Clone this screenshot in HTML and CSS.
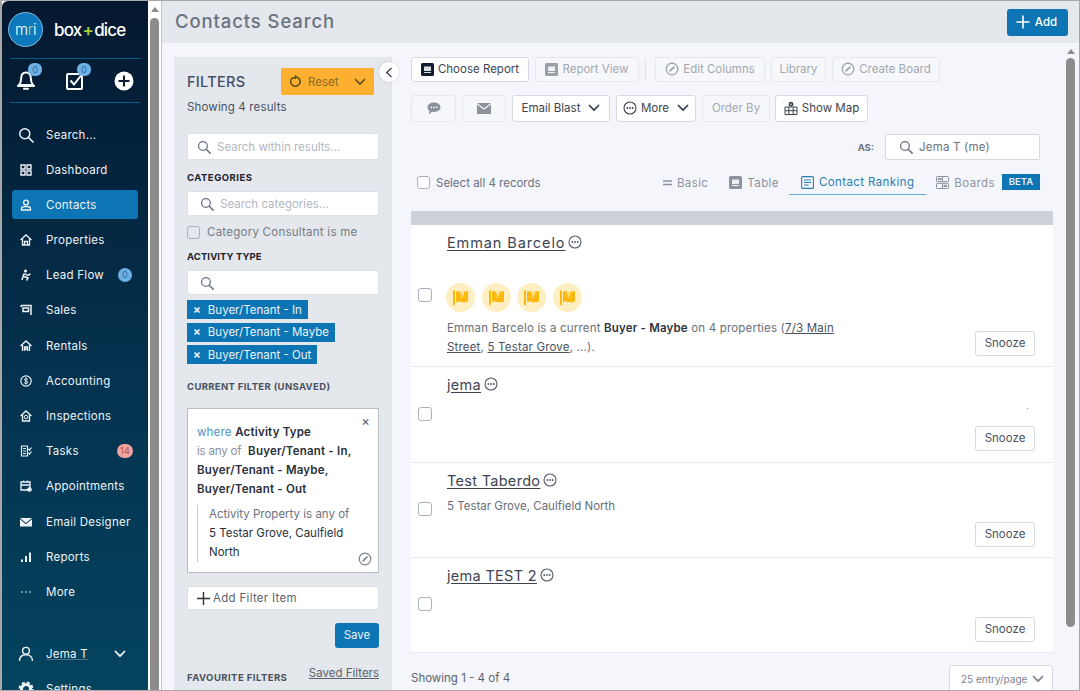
FILE: index.html
```html
<!DOCTYPE html>
<html lang="en">
<head>
  <meta charset="UTF-8">
  <title>Contacts Search</title>
  <link rel="stylesheet" href="styles.css">
</head>
<body>

<svg class="defs" width="0" height="0">
  <symbol id="i-search" viewBox="0 0 16 16"><circle cx="6.8" cy="6.8" r="5" fill="none" stroke="currentColor" stroke-width="1.5"/><path d="M10.5 10.5 15 15" stroke="currentColor" stroke-width="1.7" stroke-linecap="round"/></symbol>
  <symbol id="i-chev" viewBox="0 0 12 8"><path d="M1.5 1.5 6 6.2l4.5-4.7" fill="none" stroke="currentColor" stroke-width="1.8" stroke-linecap="round" stroke-linejoin="round"/></symbol>
  <symbol id="i-more" viewBox="0 0 14 14"><circle cx="7" cy="7" r="6" fill="none" stroke="currentColor" stroke-width="1.1"/><circle cx="4.3" cy="7" r=".95" fill="currentColor"/><circle cx="7" cy="7" r=".95" fill="currentColor"/><circle cx="9.7" cy="7" r=".95" fill="currentColor"/></symbol>
  <symbol id="i-ban" viewBox="0 0 14 14"><circle cx="7" cy="7" r="5.8" fill="none" stroke="currentColor" stroke-width="1.2"/><path d="M4.6 9.4 9.4 4.6" stroke="currentColor" stroke-width="1.5"/></symbol>
  <symbol id="i-report" viewBox="0 0 13 13"><rect width="13" height="13" rx="1.5" fill="currentColor"/><rect x="3" y="3.5" width="7" height="4.5" fill="#fff" opacity=".85"/><rect x="3" y="9" width="7" height="1" fill="#fff" opacity=".85"/></symbol>
  <symbol id="i-list" viewBox="0 0 13 13"><rect x=".6" y=".6" width="11.8" height="11.8" rx="1" fill="none" stroke="currentColor" stroke-width="1.1"/><path d="M3 4h7M3 6.5h7M3 9h4.5" stroke="currentColor" stroke-width="1"/></symbol>
  <symbol id="i-boards" viewBox="0 0 13 13"><rect x=".5" y=".5" width="12" height="5.2" rx=".8" fill="none" stroke="currentColor"/><rect x=".5" y="7.3" width="12" height="5.2" rx=".8" fill="none" stroke="currentColor"/><rect x="2" y="2" width="3.4" height="2.2" fill="currentColor"/><rect x="7.6" y="8.8" width="3.4" height="2.2" fill="currentColor"/><path d="M6.5 .5v5M6.5 7.3v5" stroke="currentColor"/></symbol>
  <symbol id="i-flag" viewBox="0 0 17 17"><rect x="1" y="1.5" width="2" height="14.5" fill="currentColor"/><path d="M4 2.5c3-1 5 .8 8 .2l4-.7v10.5c-3 1.4-5 .6-7.5.2-1.800-.3-3 0-4.500.5z" fill="currentColor"/></symbol>
</svg>

<div class="app">

  <aside class="sidebar">
    <div class="brand">
      <div class="logo"><span>m<i>r</i>i</span></div>
      <div class="wordmark">box<b>+</b>dice</div>
    </div>
    <div class="quick">
      <span class="quick-icon">
        <svg width="20" height="21" viewBox="0 0 20 21"><path d="M10 2.500c-3.300 0-4.800 2.600-4.800 5.500 0 3.500-.8 5.500-2.200 7h14c-1.400-1.500-2.200-3.500-2.200-7 0-2.900-1.500-5.500-4.800-5.500z" fill="none" stroke="#fff" stroke-width="2"/><path d="M2 16h16M8 18.800h4" stroke="#fff" stroke-width="2" stroke-linecap="round"/></svg>
        <em class="count">0</em>
      </span>
      <span class="quick-icon">
        <svg width="20" height="21" viewBox="0 0 20 21"><rect x="2" y="4" width="15" height="15" rx="1" fill="none" stroke="#fff" stroke-width="2"/><path d="m5.500 10.500 3.500 4 7-9" fill="none" stroke="#fff" stroke-width="2"/></svg>
        <em class="count">0</em>
      </span>
      <span class="quick-icon">
        <svg width="20" height="20" viewBox="0 0 20 20"><circle cx="10" cy="10" r="9.500" fill="#fff"/><path d="M10 4.500v11M4.500 10h11" stroke="#0b2038" stroke-width="2"/></svg>
      </span>
    </div>

    <nav class="nav">
      <a class="nav-item"><svg class="nav-icon big" viewBox="0 0 16 16"><use href="#i-search"/></svg>Search...</a>
      <a class="nav-item"><svg class="nav-icon" viewBox="0 0 12 12"><path d="M1 1h4v4H1zM7 1h4v4H7zM1 7h4v4H1zM7 7h4v4H7z" fill="none" stroke="currentColor" stroke-width="1.400"/></svg>Dashboard</a>
      <a class="nav-item active"><svg class="nav-icon" viewBox="0 0 12 12"><circle cx="6" cy="3.500" r="2.400" fill="none" stroke="currentColor" stroke-width="1.400"/><path d="M1.500 11V9.500c0-1.500 1.500-2 4.500-2s4.500.5 4.500 2V11z" fill="none" stroke="currentColor" stroke-width="1.400"/></svg>Contacts</a>
      <a class="nav-item"><svg class="nav-icon" viewBox="0 0 12 12"><path d="M.5 6 6 1l5.500 5M2.500 5v6h7V5M4.500 11V7.500h3V11" fill="none" stroke="currentColor" stroke-width="1.300"/></svg>Properties</a>
      <a class="nav-item"><svg class="nav-icon" viewBox="0 0 12 12"><circle cx="5.500" cy="2" r="1.600" fill="currentColor"/><path d="M4 4.500 2 11M4.500 4.500l3 2 3-1.500M4 7.500l4 1.500-1.500 2.500" fill="none" stroke="currentColor" stroke-width="1.500"/></svg>Lead Flow<em class="pill blue">0</em></a>
      <a class="nav-item"><svg class="nav-icon" viewBox="0 0 12 12"><path d="M1 1.500h10V11M1 1.500V3M3 4h5.500v3.500H3z" fill="none" stroke="currentColor" stroke-width="1.500"/></svg>Sales</a>
      <a class="nav-item"><svg class="nav-icon" viewBox="0 0 12 12"><path d="M.5 6 6 1l5.500 5M2.500 5v6M9.500 5v6M4.500 11V7h3v4M4.500 9h3" fill="none" stroke="currentColor" stroke-width="1.300"/></svg>Rentals</a>
      <a class="nav-item"><svg class="nav-icon" viewBox="0 0 12 12"><circle cx="6" cy="6" r="5.200" fill="none" stroke="currentColor" stroke-width="1.200"/><path d="M7.800 4.300C7 3.300 4.500 3.300 4.500 4.700S7.700 5.800 7.700 7.300 5 8.800 4.200 7.700M6 2.500v7" fill="none" stroke="currentColor"/></svg>Accounting</a>
      <a class="nav-item"><svg class="nav-icon" viewBox="0 0 12 12"><path d="M.5 6 6 1l5.500 5M2.500 5v6h7V5" fill="none" stroke="currentColor" stroke-width="1.300"/><circle cx="6" cy="7" r="1.800" fill="none" stroke="currentColor"/></svg>Inspections</a>
      <a class="nav-item"><svg class="nav-icon" viewBox="0 0 12 12"><path d="M1.500 1h6v10h-6zM3 3.500h3M3 6h3M3 8.500h3M8.500 4l1 1 2-2.500M8.500 8l1 1 2-2.500" fill="none" stroke="currentColor" stroke-width="1.200"/></svg>Tasks<em class="pill red">14</em></a>
      <a class="nav-item"><svg class="nav-icon" viewBox="0 0 12 12"><path d="M1 2h9v8H1zM1 5h9M3.500 .5v2M7.500 .5v2" fill="none" stroke="currentColor" stroke-width="1.300"/><circle cx="9.500" cy="9.500" r="2.300" fill="currentColor"/></svg>Appointments</a>
      <a class="nav-item"><svg class="nav-icon" viewBox="0 0 12 12"><path d="M0 2h12L6 7z" fill="currentColor"/><path d="M0 3.200V10.500h12V3.200L6 8.300z" fill="currentColor"/></svg>Email Designer</a>
      <a class="nav-item"><svg class="nav-icon" viewBox="0 0 12 12"><path d="M1 8.500h2V11H1zM5 5h2v6H5zM9 1.500h2V11H9z" fill="currentColor"/></svg>Reports</a>
      <a class="nav-item"><svg class="nav-icon" viewBox="0 0 12 12"><circle cx="2" cy="6" r=".8" fill="currentColor"/><circle cx="6" cy="6" r=".8" fill="currentColor"/><circle cx="10" cy="6" r=".8" fill="currentColor"/></svg>More</a>

      <a class="nav-item user"><svg class="nav-icon big" viewBox="0 0 16 16"><circle cx="8" cy="4.800" r="3.400" fill="none" stroke="currentColor" stroke-width="1.400"/><path d="M1.500 15c0-4 2.500-6.200 6.500-6.200s6.500 2.200 6.500 6.200" fill="none" stroke="currentColor" stroke-width="1.400"/></svg><u>Jema T</u><svg class="user-chev" width="12" height="8"><use href="#i-chev"/></svg></a>
      <a class="nav-item"><svg class="nav-icon big" viewBox="0 0 16 16"><circle cx="8" cy="8" r="4.500" fill="none" stroke="currentColor" stroke-width="3"/><circle cx="8" cy="8" r="6.500" fill="none" stroke="currentColor" stroke-width="2" stroke-dasharray="3 2.100"/></svg>Settings</a>
    </nav>
  </aside>

  <div class="side-scroll"><span class="arrow-up"></span><span class="thumb"></span></div>

  <main class="main">
    <header class="topbar">
      <h1>Contacts Search</h1>
      <button class="add-btn"><svg width="14" height="14" viewBox="0 0 14 14"><path d="M7 .5v13M.5 7h13" stroke="#fff" stroke-width="1.600"/></svg>Add</button>
    </header>

    <div class="content">

      <section class="filters">
        <span class="collapse"><svg width="8" height="11" viewBox="0 0 8 11"><path d="M6.500 1 1.800 5.500l4.700 4.500" fill="none" stroke="#4a5568" stroke-width="1.600"/></svg></span>

        <div class="filters-head">
          <h2>FILTERS</h2>
          <div class="reset">
            <svg width="13" height="13" viewBox="0 0 13 13"><path d="M3.300 2.800a4.800 4.800 0 1 0 3.200-1.100M6.500.2v3L3.500 2.700" fill="none" stroke="#5d4a1e" stroke-width="1.500"/></svg>
            <span>Reset</span>
            <svg class="reset-chev" width="12" height="8"><use href="#i-chev"/></svg>
          </div>
        </div>
        <p class="result-count">Showing 4 results</p>

        <div class="field tall"><svg width="14" height="14"><use href="#i-search"/></svg><span class="hint">Search within results...</span></div>

        <h3 class="label first">CATEGORIES</h3>
        <div class="field indent"><svg width="14" height="14"><use href="#i-search"/></svg><span class="hint">Search categories...</span></div>
        <label class="check-row"><span class="check grey"></span>Category Consultant is me</label>

        <h3 class="label">ACTIVITY TYPE</h3>
        <div class="field indent"><svg width="14" height="14"><use href="#i-search"/></svg></div>
        <div class="tags">
          <span class="tag"><i>×</i>Buyer/Tenant - In</span>
          <span class="tag"><i>×</i>Buyer/Tenant - Maybe</span>
          <span class="tag"><i>×</i>Buyer/Tenant - Out</span>
        </div>

        <h3 class="label muted">CURRENT FILTER (UNSAVED)</h3>
        <div class="filter-card">
          <span class="card-x">×</span>
          <div><span class="where">where</span> <b>Activity Type</b></div>
          <div><span class="anyof">is any of</span>&nbsp; <b>Buyer/Tenant - In,<br>Buyer/Tenant - Maybe,<br>Buyer/Tenant - Out</b></div>
          <div class="sub-filter">
            <span class="sub-label">Activity Property is any of</span><br>
            5 Testar Grove, Caulfield North
          </div>
          <svg class="card-ban" width="14" height="14"><use href="#i-ban"/></svg>
        </div>

        <button class="add-item"><svg width="13" height="13" viewBox="0 0 13 13"><path d="M6.500 0v13M0 6.500h13" stroke="#333" stroke-width="1.400"/></svg>Add Filter Item</button>
        <div class="save-row"><button class="save">Save</button></div>

        <div class="fav-row">
          <h3 class="label muted">FAVOURITE FILTERS</h3>
          <a class="saved">Saved Filters</a>
        </div>
      </section>

      <section class="results">
        <div class="toolbar first">
          <button class="btn w-choose"><svg class="dark" width="13" height="13"><use href="#i-report"/></svg>Choose Report</button>
          <button class="btn off w-view"><svg width="13" height="13"><use href="#i-report"/></svg>Report View</button>
          <span class="divider"></span>
          <button class="btn off w-edit"><svg width="14" height="14"><use href="#i-ban"/></svg>Edit Columns</button>
          <button class="btn off w-lib">Library</button>
          <button class="btn off w-board"><svg width="14" height="14"><use href="#i-ban"/></svg>Create Board</button>
        </div>

        <div class="toolbar second">
          <button class="btn off icon-only w-msg"><svg width="14" height="13" viewBox="0 0 14 13"><path d="M7 .5c3.600 0 6.500 2.100 6.500 4.800S10.600 10 7 10c-.7 0-1.300 0-1.900-.2L2 12.500l.5-3.500C1.200 8 .5 6.800.5 5.300.5 2.600 3.400.500 7 .5z" fill="#8b929c"/><circle cx="4.300" cy="5.300" r=".9" fill="#f4f6fb"/><circle cx="7" cy="5.300" r=".9" fill="#f4f6fb"/><circle cx="9.700" cy="5.300" r=".9" fill="#f4f6fb"/></svg></button>
          <button class="btn off icon-only w-mail"><svg width="14" height="11" viewBox="0 0 14 11"><path d="M0 0h14L7 5.200z" fill="#8b929c"/><path d="M0 1.600V11h14V1.600L7 6.800z" fill="#8b929c"/></svg></button>
          <button class="btn w-blast">Email Blast<svg class="chev" width="12" height="8"><use href="#i-chev"/></svg></button>
          <button class="btn w-more"><svg width="14" height="14"><use href="#i-more"/></svg>More<svg class="chev" width="12" height="8"><use href="#i-chev"/></svg></button>
          <button class="btn off w-order">Order By</button>
          <button class="btn w-map"><svg width="14" height="14" viewBox="0 0 14 14"><path d="M1 6h12v7.500H1zM1 9.700h12M4.800 6v7.500M9.200 6v7.500" fill="none" stroke="#3d4450"/><circle cx="7" cy="3.200" r="2.400" fill="#3d4450"/><circle cx="7" cy="3.200" r=".8" fill="#fff"/></svg>Show Map</button>
        </div>

        <div class="as-row">
          <span class="as-label">AS:</span>
          <div class="field as-field"><svg width="14" height="14"><use href="#i-search"/></svg><span>Jema T (me)</span></div>
        </div>

        <div class="select-row">
          <label class="select-all"><span class="check"></span>Select all 4 records</label>
          <div class="tabs">
            <a class="tab"><svg width="9" height="6" viewBox="0 0 9 6"><path d="M0 1h9M0 4.500h9" stroke="#8d939c" stroke-width="1.500"/></svg>Basic</a>
            <a class="tab tab-table"><svg width="13" height="13"><use href="#i-report"/></svg>Table</a>
            <a class="tab current"><svg width="13" height="13"><use href="#i-list"/></svg>Contact Ranking</a>
            <a class="tab tab-boards"><svg width="13" height="13"><use href="#i-boards"/></svg>Boards</a>
            <span class="beta">BETA</span>
          </div>
        </div>

        <div class="band"></div>

        <article class="row row-tall">
          <span class="check"></span>
          <div class="row-main">
            <div class="row-name"><a>Emman Barcelo</a><svg width="14" height="14"><use href="#i-more"/></svg></div>
            <div class="flags">
              <span class="flag"><svg width="17" height="17"><use href="#i-flag"/></svg><b>?</b></span>
              <span class="flag"><svg width="17" height="17"><use href="#i-flag"/></svg><b>?</b></span>
              <span class="flag"><svg width="17" height="17"><use href="#i-flag"/></svg><b>?</b></span>
              <span class="flag"><svg width="17" height="17"><use href="#i-flag"/></svg><b>?</b></span>
            </div>
            <p class="row-text">Emman Barcelo is a current <b>Buyer - Maybe</b> on 4 properties (<u>7/3 Main Street</u>, <u>5 Testar Grove</u>, ...).</p>
          </div>
          <button class="snooze">Snooze</button>
        </article>

        <article class="row row-wide">
          <span class="check"></span>
          <div class="row-main">
            <div class="row-name"><a>jema</a><svg width="14" height="14"><use href="#i-more"/></svg></div>
          </div>
          <span class="speck"></span>
          <button class="snooze">Snooze</button>
        </article>

        <article class="row">
          <span class="check"></span>
          <div class="row-main">
            <div class="row-name"><a>Test Taberdo</a><svg width="14" height="14"><use href="#i-more"/></svg></div>
            <p class="row-addr">5 Testar Grove, Caulfield North</p>
          </div>
          <button class="snooze">Snooze</button>
        </article>

        <article class="row">
          <span class="check"></span>
          <div class="row-main">
            <div class="row-name"><a>jema TEST 2</a><svg width="14" height="14"><use href="#i-more"/></svg></div>
          </div>
          <button class="snooze">Snooze</button>
        </article>

        <div class="pager">
          <span>Showing 1 - 4 of 4</span>
          <div class="per-page">25 entry/page<svg width="12" height="8"><use href="#i-chev"/></svg></div>
        </div>
      </section>

      <div class="main-scroll"><span class="arrow-up"></span><span class="thumb"></span></div>
    </div>
  </main>
</div>

</body>
</html>
```

FILE: styles.css
```css
* {
  box-sizing: border-box;
}

html, body {
  margin: 0;
  height: 691px;
  overflow: hidden;
}

body {
  font-family: Inter, "Open Sans", sans-serif;
  font-size: 11.5px;
  color: #3d4450;
}

.defs {
  position: absolute;
}

button {
  font: inherit;
  color: inherit;
  background: none;
  cursor: pointer;
}

h1, h2, h3, p {
  margin: 0;
}

.app {
  display: flex;
  width: 1080px;
  height: 691px;
  background: #fff;
  border: 1px solid #a8a8a8;
  border-left-width: 2px;
  overflow: hidden;
}

/* sidebar */

.sidebar {
  width: 146px;
  flex: none;
  color: #fff;
  background: linear-gradient(#04182f, #04324f 55%, #04445f);
  border-top-left-radius: 6px;
  overflow: hidden;
}

.brand {
  display: flex;
  align-items: center;
  height: 57px;
  padding-left: 6px;
}

.logo {
  width: 35px;
  height: 35px;
  border-radius: 50%;
  background: #0d78bb;
  border: 1px solid #7fb8dc;
  display: flex;
  align-items: center;
  justify-content: center;
  font-size: 15px;
  font-weight: 300;
  letter-spacing: -0.3px;
}

.logo i {
  font-style: normal;
  color: #b4d46a;
}

.wordmark {
  margin-left: 11px;
  font-size: 17px;
  font-weight: 500;
  letter-spacing: -0.8px;
}

.wordmark b {
  color: #a6ce39;
  font-weight: 600;
  margin: 0 1px;
}

.quick {
  display: flex;
  justify-content: space-between;
  align-items: center;
  height: 45px;
  margin: 0 8px;
  padding: 0 5px;
  border-top: 1px solid #0b5a8c;
  border-bottom: 1px solid #0b5a8c;
}

.quick-icon {
  position: relative;
  width: 22px;
  height: 21px;
  display: flex;
  justify-content: center;
  align-items: center;
}

.count {
  position: absolute;
  top: -7px;
  right: -5px;
  width: 14px;
  height: 13px;
  border-radius: 6px;
  background: #6cb0e6;
  color: #2e6a9c;
  font-size: 9px;
  font-style: normal;
  line-height: 13px;
  text-align: center;
}

.nav {
  margin: 17px 10px 0;
}

.nav-item {
  display: flex;
  align-items: center;
  height: 29px;
  margin-bottom: 6.2px;
  padding-left: 6px;
  border-radius: 3px;
  color: #eef3f7;
  letter-spacing: 0.25px;
  white-space: nowrap;
}

.nav-item.active {
  background: #0d75b3;
}

.nav-icon {
  width: 12px;
  height: 12px;
  margin: 0 14px 0 2px;
  flex: none;
}

.nav-icon.big {
  width: 16px;
  height: 16px;
  margin: 0 12px 0 0;
}

.pill {
  margin: 0 6px 0 auto;
  min-width: 14px;
  height: 14px;
  padding: 0 2px;
  border-radius: 7px;
  font-size: 9px;
  font-style: normal;
  line-height: 14px;
  text-align: center;
}

.pill.blue {
  background: #6cb0e6;
  color: #2e6a9c;
}

.pill.red {
  background: #f2a3a0;
  color: #a8534f;
  min-width: 16px;
  margin-right: 5px;
}

.user {
  margin-top: 33px;
}

.user u {
  text-decoration-color: #4f6f86;
}

.user-chev {
  margin-left: 26px;
}

/* the two grey scrollbars */

.side-scroll, .main-scroll {
  position: relative;
  flex: none;
  background: #fff;
}

.side-scroll {
  width: 14px;
  margin-left: 0;
  border-right: 1px solid #c4c4c4;
}

.arrow-up {
  position: absolute;
  left: 2px;
  top: 6px;
  border-left: 4px solid transparent;
  border-right: 4px solid transparent;
  border-bottom: 5px solid #8c8c8c;
}

.side-scroll .arrow-up {
  left: 3px;
}

.thumb {
  position: absolute;
  top: 17px;
  left: 2px;
  width: 9px;
  bottom: 0;
  border-radius: 5px 5px 0 0;
  background: #8c8c8c;
}

.main-scroll {
  width: 12px;
  margin-left: 12px;
  background: #f4f6fb;
}

.main-scroll .thumb {
  top: 15px;
  bottom: 63px;
  left: 1px;
  border-radius: 5px;
}

/* main */

.main {
  flex: 1;
  min-width: 0;
  display: flex;
  flex-direction: column;
}

.topbar {
  display: flex;
  justify-content: space-between;
  align-items: center;
  flex: none;
  height: 42px;
  padding: 0 11px 0 13px;
  background: #e4e7ec;
}

.topbar h1 {
  padding-bottom: 2px;
  font-size: 18.500px;
  font-weight: 500;
  color: #6b7280;
  letter-spacing: 0.9px;
}

.add-btn {
  display: flex;
  align-items: center;
  justify-content: center;
  gap: 5px;
  width: 61px;
  height: 27px;
  padding: 0 2px 0 0;
  border: 0;
  border-radius: 3px;
  background: #0d75b3;
  color: #fff;
  font-weight: 500;
}

.content {
  flex: 1;
  display: flex;
  min-height: 0;
  background: #f4f6fb;
}

/* filters column */

.filters {
  position: relative;
  flex: none;
  width: 218px;
  margin: 14px 0 0 12px;
  padding: 11px 13px 0;
  background: #e4e7ec;
}

.collapse {
  position: absolute;
  top: 5px;
  right: -7px;
  width: 20px;
  height: 20px;
  border-radius: 50%;
  background: #fff;
  box-shadow: 0 0 3px rgba(0, 0, 0, 0.15);
  display: flex;
  align-items: center;
  justify-content: center;
}

.filters-head {
  display: flex;
  justify-content: space-between;
  align-items: center;
  height: 27px;
  margin-right: 5px;
}

.filters-head h2 {
  font-size: 14.500px;
  font-weight: 500;
  color: #46506a;
  letter-spacing: 0.3px;
}

.reset {
  display: flex;
  align-items: center;
  width: 93px;
  height: 27px;
  padding-left: 8px;
  border-radius: 2px;
  background: #fdb02f;
  color: #8a6a28;
}

.reset span {
  margin-left: 6px;
}

.reset-chev {
  margin-left: auto;
  margin-right: 8px;
  color: #6b5320;
}

.result-count {
  margin-top: 4px;
  line-height: 16px;
  color: #4a5260;
  letter-spacing: 0.15px;
}

.field {
  display: flex;
  align-items: center;
  height: 25px;
  margin-top: 8px;
  padding-left: 9px;
  gap: 6px;
  background: #fff;
  border: 1px solid #dcdfe5;
  border-radius: 2px;
  color: #6b7280;
}

.field.tall {
  height: 27px;
  margin-top: 18px;
}

.field.indent {
  padding-left: 12px;
}

.hint {
  color: #b3b7be;
}

.label {
  margin-top: 8px;
  margin-bottom: -1px;
  padding-top: 3px;
  font-size: 9.500px;
  font-weight: 700;
  line-height: 12px;
  color: #1d2430;
  letter-spacing: 0.1px;
  white-space: nowrap;
}

.label.first {
  margin-top: 9px;
  letter-spacing: 0.5px;
}

.label.muted {
  color: #4a5260;
  letter-spacing: 0.35px;
}

.check {
  display: block;
  flex: none;
  width: 13px;
  height: 13px;
  background: #fff;
  border: 1px solid #aab0bf;
  border-radius: 3px;
}

.check.grey {
  background: #e4e7ec;
}

.check-row {
  display: flex;
  align-items: center;
  gap: 7px;
  height: 16px;
  margin-top: 8px;
  color: #757b85;
  letter-spacing: 0.25px;
}

.tags {
  display: flex;
  flex-direction: column;
  align-items: flex-start;
  gap: 3.500px;
  margin-top: 5px;
}

.tag {
  display: flex;
  align-items: center;
  height: 19px;
  padding: 0 6px;
  background: #0d75b3;
  color: #eaf3f9;
  white-space: nowrap;
}

.tag i {
  font-style: normal;
  font-weight: 700;
  margin-right: 7px;
}

.tags + .label {
  margin-top: 14px;
}

.filter-card {
  position: relative;
  height: 165px;
  margin-top: 16px;
  padding: 14px 9px 0;
  background: #fff;
  border: 1px solid #b8bdc8;
  line-height: 19px;
  color: #2a303a;
  letter-spacing: 0.2px;
}

.filter-card b {
  font-weight: 600;
}

.where {
  color: #4e93bf;
}

.anyof {
  color: #8b919b;
  letter-spacing: -0.2px;
}

.card-x {
  position: absolute;
  top: 3px;
  right: 8px;
  font-size: 13px;
  color: #555c68;
}

.sub-filter {
  margin-top: 6px;
  padding-left: 11px;
  border-left: 1px solid #c5cad5;
  letter-spacing: 0;
}

.sub-label {
  color: #6b7280;
}

.card-ban {
  position: absolute;
  right: 6px;
  bottom: 6px;
  color: #7d8390;
}

.add-item {
  display: flex;
  align-items: center;
  gap: 3px;
  width: 100%;
  height: 24px;
  margin-top: 13px;
  padding: 0 0 0 9px;
  background: #fff;
  border: 1px solid #dcdfe5;
  border-radius: 2px;
  color: #5c626d;
  letter-spacing: 0.3px;
}

.save-row {
  display: flex;
  justify-content: flex-end;
  margin-top: 13px;
}

.save {
  width: 44px;
  height: 25px;
  padding: 0 0 2px;
  border: 0;
  border-radius: 3px;
  background: #0d75b3;
  color: #e6f1f8;
}

.fav-row {
  display: flex;
  justify-content: space-between;
  margin-top: 19px;
}

.fav-row .label {
  margin-top: 2px;
  letter-spacing: 0.45px;
}

.saved {
  margin-top: -1px;
  color: #5c626d;
  text-decoration: underline;
}

/* results column */

.results {
  flex: none;
  width: 642px;
  margin-left: 19px;
}

.toolbar {
  display: flex;
  align-items: center;
  gap: 6px;
}

.toolbar.first {
  height: 25px;
  margin-top: 14px;
}

.toolbar.second {
  height: 27px;
  margin-top: 13px;
}

.btn {
  display: flex;
  align-items: center;
  justify-content: center;
  gap: 4px;
  height: 100%;
  padding: 0 0 1px;
  background: #fff;
  border: 1px solid #d6d9df;
  border-radius: 3px;
  color: #3d4450;
  white-space: nowrap;
}

.btn.off {
  background: #f6f7fb;
  border-color: #e6e8ee;
  color: #a3a8b0;
}

.btn.off svg {
  color: #9a9fa8;
}

.btn .dark {
  color: #111d2e;
}

.chev {
  margin-left: 4px;
}

.w-choose { width: 118px; }
.w-view { width: 104px; }
.w-edit { width: 110px; }
.w-lib { width: 55px; }
.w-board { width: 108px; }
.w-msg { width: 45px; }
.w-mail { width: 44px; }
.w-blast { width: 98px; }
.w-more { width: 80px; }
.w-order { width: 68px; }
.w-map { width: 93px; margin-left: -1px; }

.divider {
  width: 1px;
  height: 21px;
  margin: 0 3px 0 0;
  background: #dfe2e8;
}

.as-row {
  display: flex;
  justify-content: flex-end;
  align-items: center;
  height: 26px;
  margin-top: 12px;
  padding-right: 13px;
}

.as-label {
  margin-right: 11px;
  font-size: 9.500px;
  font-weight: 700;
  color: #6b7280;
}

.field.as-field {
  width: 155px;
  height: 26px;
  margin: 0;
  padding-left: 13px;
  border-color: #d6d9df;
  letter-spacing: 0.2px;
}

.select-row {
  display: flex;
  align-items: center;
  justify-content: space-between;
  height: 25px;
  margin-top: 10px;
  padding: 0 13px 0 6px;
}

.select-all {
  display: flex;
  align-items: center;
  gap: 6px;
  color: #6b7280;
}

.tabs {
  display: flex;
  align-items: center;
  height: 25px;
  letter-spacing: 0.4px;
}

.tab {
  display: flex;
  align-items: center;
  gap: 5px;
  height: 25px;
  padding: 0 11px;
  color: #8d939c;
}

.tab-table {
  padding: 0 10px;
}

.tab-boards {
  padding: 0 10px;
}

.tab svg {
  color: #8d939c;
}

.tab.current, .tab.current svg {
  color: #2a80b5;
}

.tab.current {
  padding: 0 12px;
  border-bottom: 1px solid #64abd6;
}

.beta {
  margin-left: -3px;
  width: 38px;
  height: 16px;
  margin-bottom: 2px;
  background: #0d75b3;
  color: #e8f2f8;
  font-size: 9.500px;
  font-weight: 600;
  line-height: 16px;
  letter-spacing: 0;
  text-align: center;
}

.band {
  height: 14px;
  margin-top: 16px;
  background: #ccd1da;
}

.row {
  position: relative;
  display: flex;
  align-items: center;
  height: 95px;
  padding: 0 18px 0 7px;
  background: #fff;
  border-bottom: 1px solid #e8eaee;
}

.row-tall {
  height: 142px;
}

.row-wide {
  height: 96px;
}

.row > .check {
  width: 14px;
  height: 14px;
  margin-bottom: 2px;
}

.row-main {
  align-self: flex-start;
  width: 392px;
  margin-left: 15px;
  padding-top: 8px;
}

.row-name {
  display: flex;
  align-items: center;
  gap: 3px;
  height: 18px;
  font-size: 14.500px;
  letter-spacing: 0.3px;
  color: #3d4450;
}

.row-tall .row-name {
  letter-spacing: 0.9px;
}

.row-name a {
  text-decoration: underline;
  text-underline-offset: 2px;
}

.row-name svg {
  color: #555c68;
}

.flags {
  display: flex;
  gap: 6.500px;
  margin-top: 32px;
  margin-left: -1px;
}

.flag {
  position: relative;
  width: 29px;
  height: 29px;
  border-radius: 50%;
  background: #ffeec2;
  color: #fbb90f;
  display: flex;
  align-items: center;
  justify-content: center;
}

.flag b {
  position: absolute;
  top: 7px;
  left: 14px;
  font-size: 8px;
  color: #fff1c9;
}

.row-text {
  margin-top: 7px;
  line-height: 19px;
  color: #686e79;
  letter-spacing: 0.18px;
}

.row-text b {
  font-weight: 600;
  color: #2e3440;
}

.row-text u {
  color: #4a5260;
}

.row-addr {
  margin-top: 10px;
  color: #686e79;
}

.snooze {
  align-self: flex-end;
  width: 60px;
  height: 25px;
  margin-left: auto;
  margin-bottom: 10px;
  padding: 0 0 2px;
  background: #fff;
  border: 1px solid #d6d9df;
  border-radius: 3px;
  color: #4a5260;
}

.row-wide .snooze {
  margin-bottom: 11px;
}

.speck {
  position: absolute;
  top: 41px;
  right: 25px;
  width: 1px;
  height: 1px;
  background: #8a93b0;
}

.pager {
  display: flex;
  justify-content: space-between;
  align-items: flex-start;
  margin-top: 12px;
  color: #5c626d;
}

.pager > span {
  margin-top: 6px;
}

.per-page {
  display: flex;
  align-items: center;
  justify-content: space-between;
  width: 104px;
  height: 30px;
  padding: 0 8px 2px 11px;
  background: #fff;
  border: 1px solid #d6d9df;
  border-radius: 3px;
  font-size: 10px;
  color: #7d8390;
}
```
